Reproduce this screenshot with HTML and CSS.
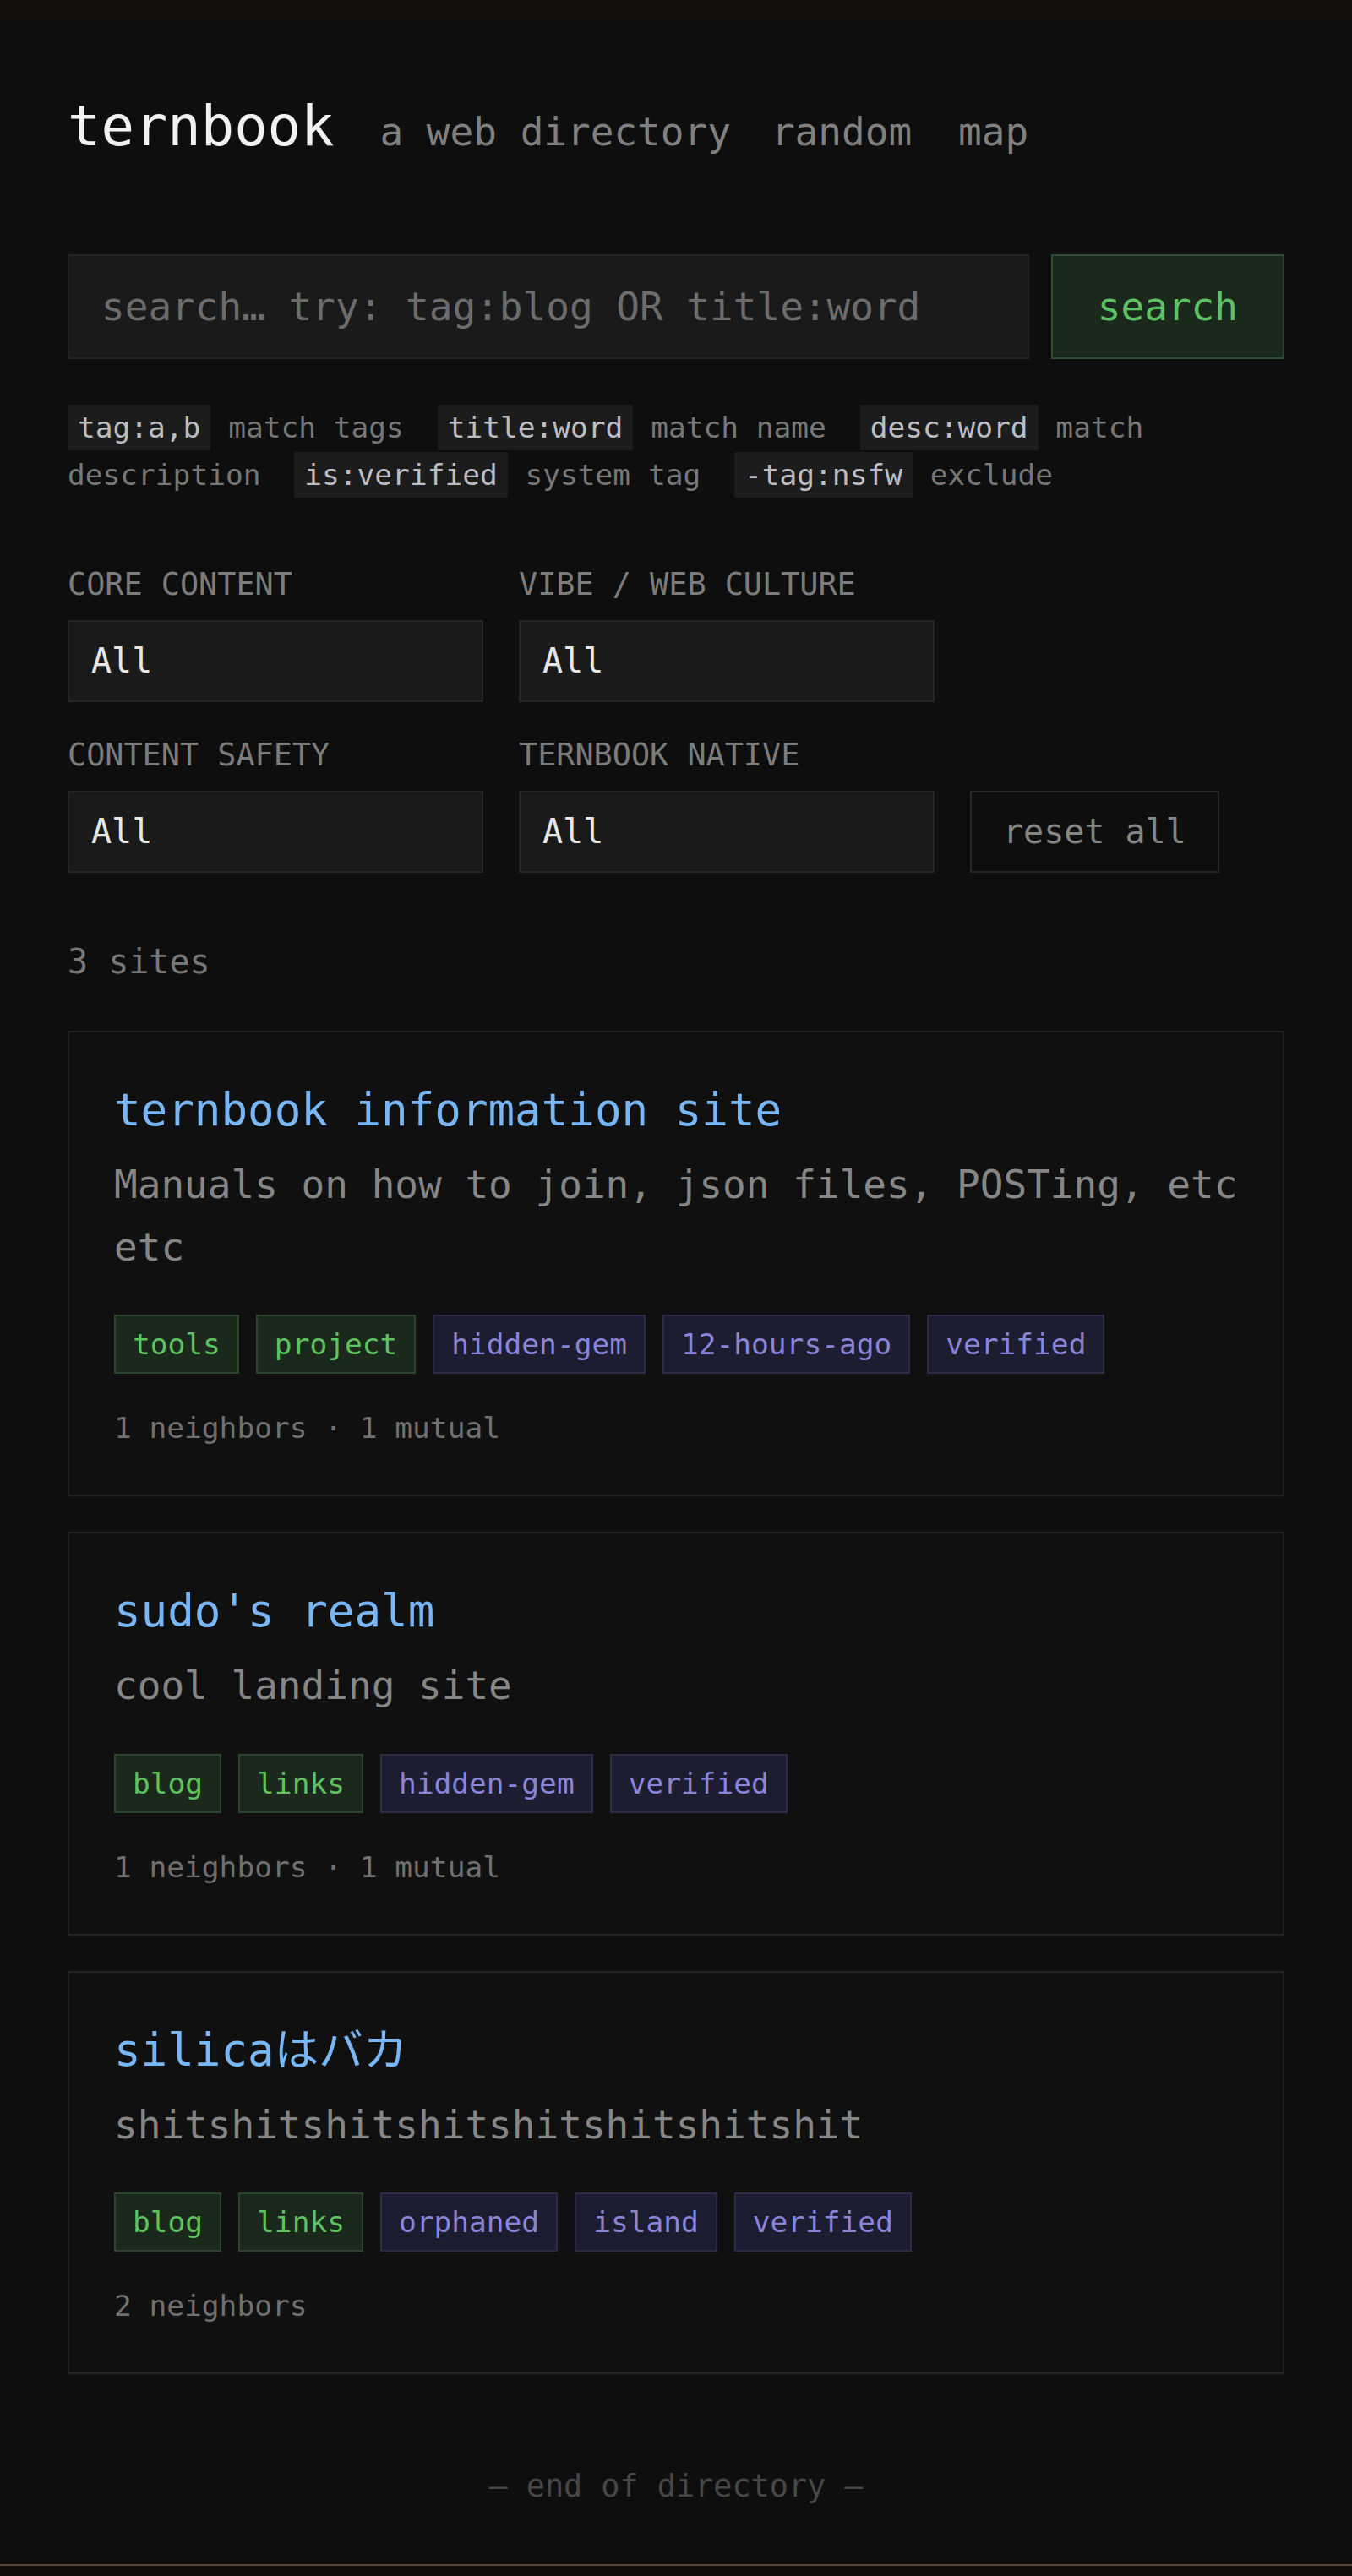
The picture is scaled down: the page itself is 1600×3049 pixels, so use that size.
FILE: index.html
```html
<!DOCTYPE html>
<html lang="en">
<head>
    <meta charset="UTF-8">
    <meta name="viewport" content="width=device-width, initial-scale=1.0">
    <title>ternbook</title>
    <link rel="stylesheet" href="styles.css">
</head>
<body>

    <div class="topbar"></div>

    <div class="page">
        <header class="header">
            <h1 class="logo">ternbook</h1>
            <span class="tagline">a web directory</span>
            <nav class="nav">
                <a class="nav-link" href="#">random</a>
                <a class="nav-link" href="#">map</a>
            </nav>
        </header>

        <form class="search-row" onsubmit="return false">
            <input type="text" class="search-input" placeholder="search… try: tag:blog OR title:word">
            <button class="search-button">search</button>
        </form>

        <p class="help">
            <span class="help-item"><code>tag:a,b</code> match tags</span>
            <span class="help-item"><code>title:word</code> match name</span>
            <span class="help-item"><code>desc:word</code> match description</span>
            <span class="help-item"><code>is:verified</code> system tag</span>
            <span class="help-item"><code>-tag:nsfw</code> exclude</span>
        </p>

        <div class="filters">
            <div class="filter">
                <label class="filter-label">CORE CONTENT</label>
                <select class="filter-select"><option>All</option></select>
            </div>
            <div class="filter">
                <label class="filter-label">VIBE / WEB CULTURE</label>
                <select class="filter-select"><option>All</option></select>
            </div>
            <div class="filter">
                <label class="filter-label">CONTENT SAFETY</label>
                <select class="filter-select"><option>All</option></select>
            </div>
            <div class="filter">
                <label class="filter-label">TERNBOOK NATIVE</label>
                <select class="filter-select"><option>All</option></select>
            </div>
            <button class="reset-button">reset all</button>
        </div>

        <div class="count">3 sites</div>

        <div class="sites">
            <div class="site-card">
                <a class="site-title" href="#">ternbook information site</a>
                <p class="site-desc">Manuals on how to join, json files, POSTing, etc etc</p>
                <div class="tags">
                    <span class="tag tag-green">tools</span>
                    <span class="tag tag-green">project</span>
                    <span class="tag tag-purple">hidden-gem</span>
                    <span class="tag tag-purple">12-hours-ago</span>
                    <span class="tag tag-purple">verified</span>
                </div>
                <div class="site-meta">1 neighbors · 1 mutual</div>
            </div>

            <div class="site-card">
                <a class="site-title" href="#">sudo's realm</a>
                <p class="site-desc">cool landing site</p>
                <div class="tags">
                    <span class="tag tag-green">blog</span>
                    <span class="tag tag-green">links</span>
                    <span class="tag tag-purple">hidden-gem</span>
                    <span class="tag tag-purple">verified</span>
                </div>
                <div class="site-meta">1 neighbors · 1 mutual</div>
            </div>

            <div class="site-card">
                <a class="site-title" href="#">silicaはバカ</a>
                <p class="site-desc">shitshitshitshitshitshitshitshit</p>
                <div class="tags">
                    <span class="tag tag-green">blog</span>
                    <span class="tag tag-green">links</span>
                    <span class="tag tag-purple">orphaned</span>
                    <span class="tag tag-purple">island</span>
                    <span class="tag tag-purple">verified</span>
                </div>
                <div class="site-meta">2 neighbors</div>
            </div>
        </div>

        <footer class="end">— end of directory —</footer>
    </div>

    <div class="bottombar"></div>

</body>
</html>
```

FILE: styles.css
```css
body {
    margin: 0;
    background: #0e0e0e;
    color: #888;
    font-family: "DejaVu Sans Mono", "Noto Sans CJK JP", monospace;
}

.topbar {
    position: fixed;
    top: 0;
    left: 0;
    right: 0;
    height: 23px;
    background: #15100c;
}

.bottombar {
    position: fixed;
    left: 0;
    right: 0;
    bottom: 0;
    height: 12px;
    border-top: 2px solid #54463a;
    background: #140e0a;
}

.page {
    padding: 110px 80px 80px;
}

/* header */

.header {
    display: flex;
    align-items: baseline;
    gap: 54px;
}

.logo {
    margin: 0;
    font-size: 65.5px;
    font-weight: normal;
    line-height: 1.2;
    color: #f2f2f2;
}

.nav {
    display: flex;
    gap: 55px;
    margin-left: -6px;
}

.tagline, .nav-link {
    font-size: 46px;
    color: #808080;
    text-decoration: none;
}

/* search */

.search-row {
    display: flex;
    gap: 26px;
    margin: 112px 0 0;
}

.search-input {
    flex: 1;
    height: 124px;
    box-sizing: border-box;
    padding: 0 38px;
    background: #1a1a1a;
    border: 2px solid #242424;
    color: #ddd;
    font-family: inherit;
    font-size: 46px;
    outline: none;
}

.search-input::placeholder {
    color: #6c6c6c;
}

.search-button {
    height: 124px;
    padding: 0 53px;
    background: #1b291d;
    border: 2px solid #2e4e32;
    color: #5ec264;
    font-family: inherit;
    font-size: 46px;
}

/* help line */

.help {
    margin: 53px 0 0;
    font-size: 34.5px;
    line-height: 56px;
    color: #777;
}

.help-item {
    margin-right: 19px;
}

.help code {
    padding: 7px 12px;
    background: #1c1c1c;
    color: #bcbdc5;
    font-family: inherit;
}

/* filters */

.filters {
    display: flex;
    flex-wrap: wrap;
    align-items: flex-end;
    column-gap: 42px;
    row-gap: 41px;
    margin-top: 80px;
}

.filter {
    display: flex;
    flex-direction: column;
    gap: 20px;
    width: 492px;
}

.filter-label {
    font-size: 36.8px;
    line-height: 1.2;
    color: #7c7c7c;
}

.filter-select {
    height: 97px;
    padding: 0 26px;
    appearance: none;
    background: #1a1a1a;
    border: 2px solid #262626;
    border-radius: 0;
    color: #e6e6e6;
    font-family: inherit;
    font-size: 40px;
}

.reset-button {
    height: 97px;
    padding: 0 37px;
    background: #0e0e0e;
    border: 2px solid #272727;
    color: #858585;
    font-family: inherit;
    font-size: 40px;
}

.count {
    margin-top: 81px;
    font-size: 40px;
    line-height: 1.2;
    color: #777;
}

/* site cards */

.sites {
    display: flex;
    flex-direction: column;
    gap: 42px;
    margin-top: 58px;
}

.site-card {
    padding: 54px 50px 53px 53px;
    background: #101010;
    border: 2px solid #232323;
}

.site-title {
    display: block;
    font-size: 52.5px;
    line-height: 76px;
    color: #78b6f6;
    text-decoration: none;
}

.site-desc {
    margin: 14px 0 0;
    font-size: 46px;
    line-height: 1.6;
    color: #868686;
}

.tags {
    display: flex;
    flex-wrap: wrap;
    gap: 20px;
    margin-top: 43px;
}

.tag {
    padding: 13px 20px;
    border: 2px solid;
    font-size: 34.5px;
}

.tag-green {
    background: #1a291b;
    border-color: #2b452d;
    color: #5ec25f;
}

.tag-purple {
    background: #1d1d32;
    border-color: #2c2c48;
    color: #8985d8;
}

.site-meta {
    margin-top: 38px;
    font-size: 34.5px;
    line-height: 52px;
    color: #707070;
}

.end {
    margin-top: 111px;
    text-align: center;
    font-size: 36.8px;
    line-height: 1.2;
    color: #474747;
}
```
